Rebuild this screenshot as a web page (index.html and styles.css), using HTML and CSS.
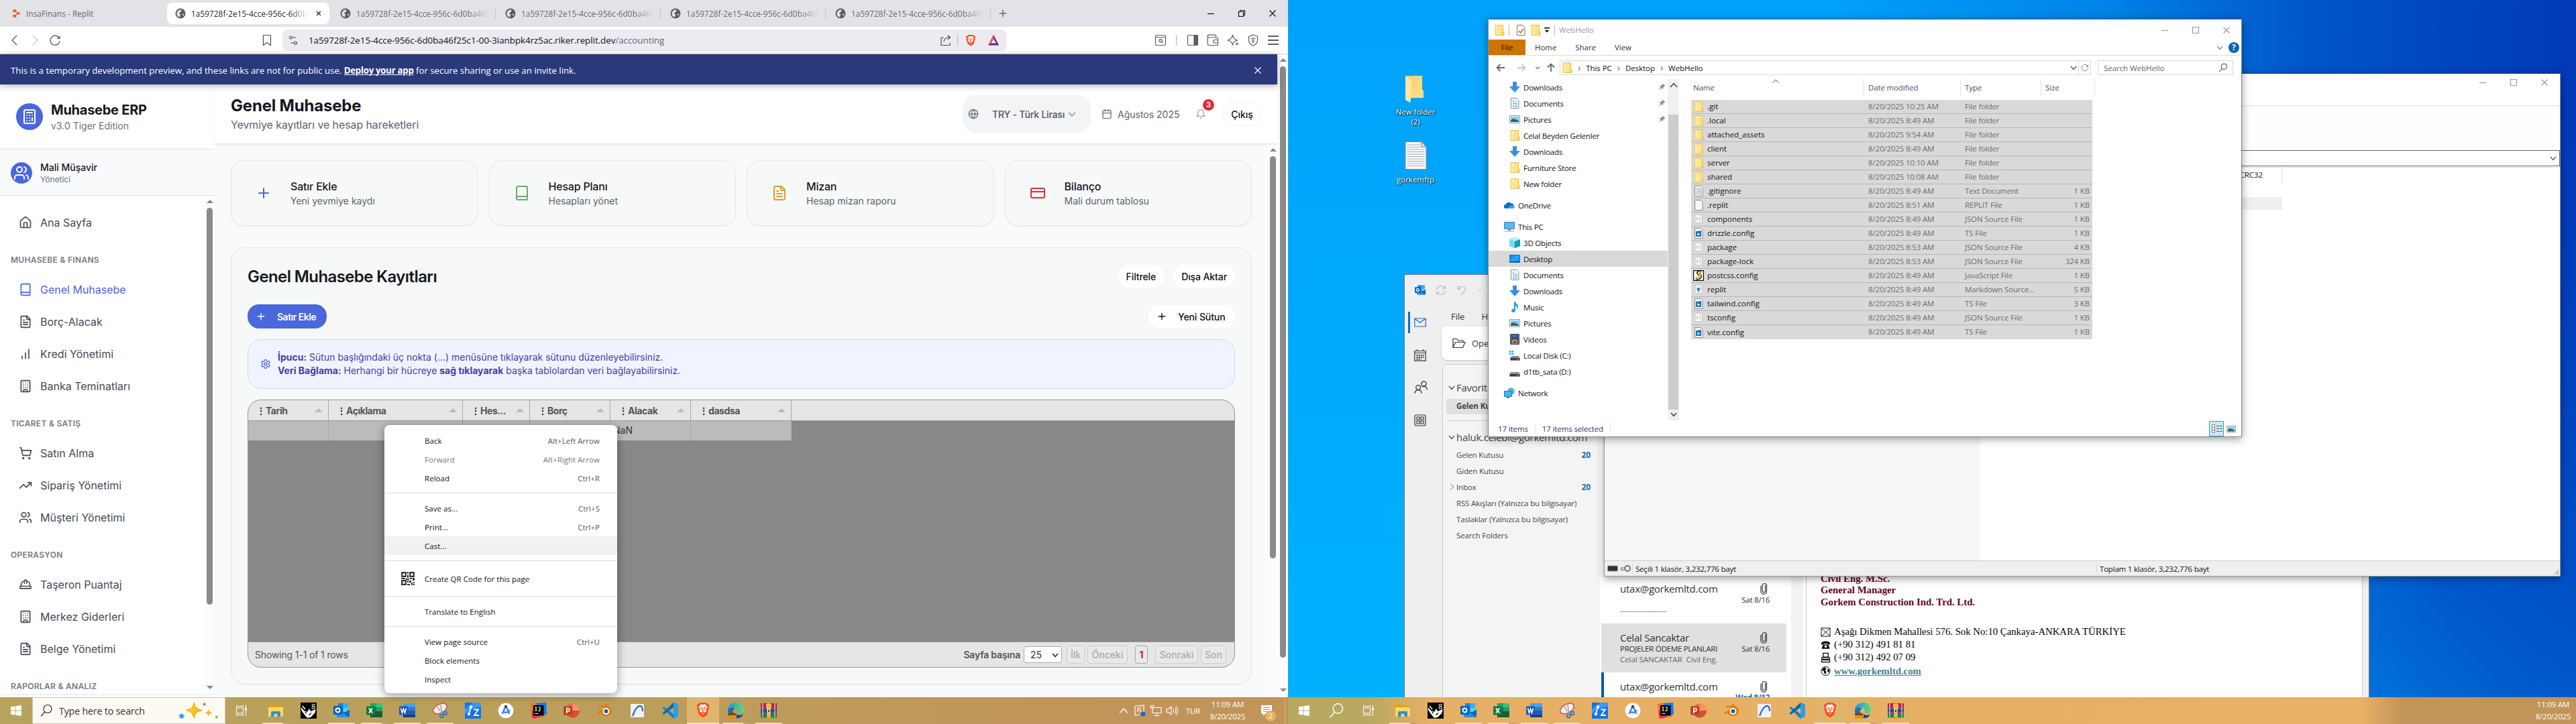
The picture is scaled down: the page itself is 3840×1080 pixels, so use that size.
FILE: index.html
```html
<!DOCTYPE html>
<html lang="tr">
<head>
<meta charset="utf-8">
<title>Muhasebe ERP</title>
<link rel="stylesheet" href="styles.css">
</head>
<body>
<svg class="sprite" aria-hidden="true">
<defs>
<linearGradient id="gfold" x1="0" x2="1"><stop offset="0" stop-color="#ffeca6"/><stop offset="1" stop-color="#ffdd7a"/></linearGradient>
<linearGradient id="gfold2" x1="0" x2="1" y2="1"><stop offset="0" stop-color="#f3cf6c"/><stop offset="1" stop-color="#ffe08a"/></linearGradient>
<linearGradient id="gblue" x1="0" y1="0" x2="1" y2="1"><stop offset="0" stop-color="#0a7bd8"/><stop offset=".5" stop-color="#29a8ff"/><stop offset="1" stop-color="#0a86e8"/></linearGradient>
<linearGradient id="gedge" x1="0" y1="0" x2="1" y2="0"><stop offset="0" stop-color="#1b8fe0"/><stop offset="1" stop-color="#5be07a"/></linearGradient>
<linearGradient id="gstar" x1="0" y1="0" x2="1" y2="1"><stop offset="0" stop-color="#ffe04a"/><stop offset="1" stop-color="#f5a800"/></linearGradient>
</defs>
<symbol id="globe-s" viewBox="0 0 16 16"><circle cx="8" cy="8" r="7.5" fill="#5b5d61"/><path d="M8 2.5c2 .3 2.500 1.200 1 2.200s-.5 1.800-2 2.300-1.500 1.500 0 1.800 1.500 1.500.5 2.700L7 13.500c-3-.5-5-3-4.500-6C3.200 4.500 5.500 2.400 8 2.500zM11.500 8.500l2 .5-1 2.500-1.500-1z" fill="#e3e2e7"/></symbol>
<symbol id="replit" viewBox="0 0 16 16" fill="#e8622a"><path d="M3 1.500h4.500a1 1 0 0 1 1 1V6H4a1.500 1.500 0 0 1-1.500-1.500V2zM8.500 6H13a1.200 1.200 0 0 1 1.200 1.200v1.600A1.200 1.200 0 0 1 13 10H8.500zM4 10h4.500v3.500a1 1 0 0 1-1 1H3.500a1 1 0 0 1-1-1v-2A1.500 1.500 0 0 1 4 10z"/></symbol>
<symbol id="x" viewBox="0 0 12 12"><path d="M1.500 1.500l9 9M10.500 1.500l-9 9"/></symbol>
<symbol id="plus" viewBox="0 0 24 24"><path d="M5 12h14M12 5v14"/></symbol>
<symbol id="min" viewBox="0 0 12 12"><path d="M1 6.500h10"/></symbol>
<symbol id="max" viewBox="0 0 12 12"><path d="M1.500 1.500h9v9h-9z"/></symbol>
<symbol id="restore" viewBox="0 0 12 12"><path d="M1.500 3.500h7v7h-7zM3.500 3.500v-2h7v7h-2"/></symbol>
<symbol id="chl" viewBox="0 0 18 18"><path d="M12 2L5 9l7 7"/></symbol>
<symbol id="chr" viewBox="0 0 18 18"><path d="M6 2l7 7-7 7"/></symbol>
<symbol id="chd" viewBox="0 0 12 12"><path d="M2 4l4 4.500L10 4"/></symbol>
<symbol id="chu" viewBox="0 0 12 12"><path d="M1 9l5-5.500L11 9"/></symbol>
<symbol id="reload" viewBox="0 0 18 18"><path d="M15.500 6.500A7 7 0 1 0 16 10"/><path d="M16.500 2.500v4.500H12z" fill="currentColor" stroke="none"/></symbol>
<symbol id="bookmark" viewBox="0 0 18 18"><path d="M4.500 1.500h9a1 1 0 0 1 1 1v14L9 12.500 3.500 16.500v-14a1 1 0 0 1 1-1z"/></symbol>
<symbol id="tune" viewBox="0 0 16 16"><circle cx="4.500" cy="4" r="2"/><path d="M6.500 4H12M9.500 12H4"/><circle cx="11.500" cy="12" r="2"/></symbol>
<symbol id="share" viewBox="0 0 18 18"><path d="M6 5H2v11.500h13V13M6 11c.5-4 3-6.500 9-6.500M11.500 1.500l4 3-4 3.500"/></symbol>
<symbol id="brave" viewBox="0 0 18 20"><path d="M5 1h8l1.500 1.500L17 4l-1 3 .3 1-2.300 8L9 19.500 4 16 1.700 8 2 7 1 4l2.500-1.500z" fill="#fb4e1d"/><path d="M9 3.500l2.500-.5 3 3.500-2 3 .8 2-2.300 2L9 16l-2-2.500-2.300-2 .8-2-2-3L6.500 3z" fill="#fff"/><path d="M5.500 7l2.500.6L7.500 10l1.500 1 1.500-1L10 7.600l2.500-.6M7.500 13.200L9 12.300l1.500.9L9 14.500z" stroke="#fb4e1d" fill="none" stroke-width="1"/></symbol>
<symbol id="bat" viewBox="0 0 18 18"><path d="M9 1L17 16.500H1z" fill="#4b2a8c"/><path d="M9 1L1 16.500l4-2.500L9 6.500z" fill="#ff5a2a"/><path d="M9 1l8 15.500-4-2.500L9 6.500z" fill="#a3278f"/><path d="M9 7l3.600 6.500H5.400z" fill="#fff"/></symbol>
<symbol id="psearch" viewBox="0 0 18 18"><rect x="1.500" y="1.500" width="15" height="15" rx="1.500"/><path d="M1.500 4.500h15M10.500 11.500l2 2"/><circle cx="9" cy="9.500" r="2.200"/></symbol>
<symbol id="side" viewBox="0 0 18 18"><rect x="1.500" y="1.500" width="15" height="15" rx="1.500"/><path d="M11 2h5v14h-5z" fill="currentColor"/></symbol>
<symbol id="wallet" viewBox="0 0 18 18"><path d="M13.500 5V2a.8.8 0 0 0-.8-.8H3A1.800 1.800 0 0 0 3 5h12.500a1 1 0 0 1 1 1v9.500a1 1 0 0 1-1 1H3a1.800 1.800 0 0 1-1.700-1.700V3M16.500 8.500H12a2.200 2.200 0 0 0 0 4.500h4.500"/></symbol>
<symbol id="leo" viewBox="0 0 18 18"><path d="M8.500 1c.8 4.500 2 6.500 7 8-5 1.500-6.200 3-7 7.500C7.500 12 6.500 10.500 1 9c5.500-1.500 6.500-3.500 7.500-8zM15 12v5M12.500 14.500h5"/></symbol>
<symbol id="vpn" viewBox="0 0 18 18"><path d="M9 1l6.500 2.300v6c0 3.500-2.500 6-6.500 7.700-4-1.700-6.500-4.200-6.500-7.700v-6zM5.500 7c2-1.700 5-1.700 7 0M6.800 9.300c1.300-1 3.100-1 4.400 0"/><circle cx="9" cy="11.500" r=".8"/></symbol>
<symbol id="burger" viewBox="0 0 18 18"><path d="M1 3h16M1 9h16M1 15h16"/></symbol>
<symbol id="calc" viewBox="0 0 24 24"><rect x="4" y="2" width="16" height="20" rx="2"/><path d="M8 6h8M16 10h.01M12 10h.01M8 10h.01M12 14h.01M8 14h.01M12 18h.01M8 18h.01M16 14v4"/></symbol>
<symbol id="users" viewBox="0 0 24 24"><path d="M16 21v-2a4 4 0 0 0-4-4H6a4 4 0 0 0-4 4v2"/><circle cx="9" cy="7" r="4"/><path d="M22 21v-2a4 4 0 0 0-3-3.870M16 3.130a4 4 0 0 1 0 7.750"/></symbol>
<symbol id="home" viewBox="0 0 24 24"><path d="M15 21v-8a1 1 0 0 0-1-1h-4a1 1 0 0 0-1 1v8"/><path d="M3 10a2 2 0 0 1 .709-1.528l7-5.999a2 2 0 0 1 2.582 0l7 5.999A2 2 0 0 1 21 10v9a2 2 0 0 1-2 2H5a2 2 0 0 1-2-2z"/></symbol>
<symbol id="book" viewBox="0 0 24 24"><path d="M4 19.500v-15A2.500 2.500 0 0 1 6.500 2H19a1 1 0 0 1 1 1v18a1 1 0 0 1-1 1H6.500a1 1 0 0 1 0-5H20"/></symbol>
<symbol id="file" viewBox="0 0 24 24"><path d="M15 2H6a2 2 0 0 0-2 2v16a2 2 0 0 0 2 2h12a2 2 0 0 0 2-2V7z"/><path d="M14 2v4a2 2 0 0 0 2 2h4M10 9H8M16 13H8M16 17H8"/></symbol>
<symbol id="bars" viewBox="0 0 24 24"><path d="M12 20V10M18 20V4M6 20v-4"/></symbol>
<symbol id="building" viewBox="0 0 24 24"><rect x="4" y="2" width="16" height="20" rx="2"/><path d="M9 22v-4h6v4M8 6h.01M16 6h.01M12 6h.01M12 10h.01M12 14h.01M16 10h.01M16 14h.01M8 10h.01M8 14h.01"/></symbol>
<symbol id="cart" viewBox="0 0 24 24"><circle cx="8" cy="21" r="1"/><circle cx="19" cy="21" r="1"/><path d="M2.050 2.050h2l2.660 12.420a2 2 0 0 0 2 1.580h9.780a2 2 0 0 0 1.950-1.570l1.650-7.430H5.120"/></symbol>
<symbol id="trend" viewBox="0 0 24 24"><path d="M22 7l-8.500 8.500-5-5L2 17"/><path d="M16 7h6v6"/></symbol>
<symbol id="hat" viewBox="0 0 24 24"><path d="M10 10V5a1 1 0 0 1 1-1h2a1 1 0 0 1 1 1v5M14 6a6 6 0 0 1 6 6v3M4 15v-3a6 6 0 0 1 6-6"/><rect x="2" y="15" width="20" height="4" rx="1"/></symbol>
<symbol id="globe" viewBox="0 0 24 24"><circle cx="12" cy="12" r="10"/><path d="M12 2a14.500 14.500 0 0 0 0 20 14.500 14.500 0 0 0 0-20M2 12h20"/></symbol>
<symbol id="cal" viewBox="0 0 24 24"><path d="M8 2v4M16 2v4"/><rect x="3" y="4" width="18" height="18" rx="2"/><path d="M3 10h18"/></symbol>
<symbol id="bell" viewBox="0 0 24 24"><path d="M6 8a6 6 0 0 1 12 0c0 7 3 9 3 9H3s3-2 3-9M10.300 21a1.940 1.940 0 0 0 3.400 0"/></symbol>
<symbol id="card" viewBox="0 0 24 24"><rect x="2" y="5" width="20" height="14" rx="2"/><path d="M2 10h20"/></symbol>
<symbol id="gear" viewBox="0 0 24 24"><path d="M12.220 2h-.44a2 2 0 0 0-2 2v.18a2 2 0 0 1-1 1.730l-.43.25a2 2 0 0 1-2 0l-.15-.08a2 2 0 0 0-2.730.73l-.22.38a2 2 0 0 0 .73 2.730l.15.1a2 2 0 0 1 1 1.720v.51a2 2 0 0 1-1 1.740l-.15.09a2 2 0 0 0-.73 2.730l.22.38a2 2 0 0 0 2.730.73l.15-.08a2 2 0 0 1 2 0l.43.25a2 2 0 0 1 1 1.730V20a2 2 0 0 0 2 2h.44a2 2 0 0 0 2-2v-.18a2 2 0 0 1 1-1.730l.43-.25a2 2 0 0 1 2 0l.15.08a2 2 0 0 0 2.730-.73l.22-.39a2 2 0 0 0-.73-2.730l-.15-.08a2 2 0 0 1-1-1.740v-.5a2 2 0 0 1 1-1.740l.15-.09a2 2 0 0 0 .73-2.730l-.22-.38a2 2 0 0 0-2.730-.73l-.15.08a2 2 0 0 1-2 0l-.43-.25a2 2 0 0 1-1-1.730V4a2 2 0 0 0-2-2z"/><circle cx="12" cy="12" r="3"/></symbol>
<symbol id="qr" viewBox="0 0 20 20"><path d="M1.200 1.200h5.600v5.600H1.200zM13.200 1.200h5.600v5.600h-5.600zM1.200 13.200h5.600v5.600H1.200z" fill="none" stroke="#333" stroke-width="2.200"/><path d="M9 0h2v3H9zM9 5h2v4H9zM0 9h6v2H0zM7 10h5v2H7zM13 9h3v2h-3zM17 9h3v4h-3zM9 13h2v3H9zM9 18h4v2H9zM12 13h3v3h-3zM15 16h2v4h-2zM18 15h2v2h-2zM18 18h2v2h-2z" fill="#333"/></symbol>
<symbol id="win" viewBox="0 0 16 16"><path d="M0 2.300L6.600 1.400v6.200H0zM7.400 1.300L16 0v7.600H7.400zM0 8.400h6.600v6.200L0 13.700zM7.400 8.400H16V16l-8.600-1.300z" fill="#fff"/></symbol>
<symbol id="mag" viewBox="0 0 20 20"><circle cx="12" cy="7.500" r="6"/><path d="M7.800 12L2 18.500"/></symbol>
<symbol id="spark" viewBox="0 0 64 26"><path d="M25 0c1.500 8 4 10 12 12-8 2-10.500 4-12 12-1.500-8-4-10-12-12 8-2 10.500-4 12-12z" fill="url(#gstar)" stroke="#f5b400" stroke-width="1.500" stroke-linejoin="round"/><path d="M47.500 10c.8 4 2 5 6 6-4 1-5.200 2-6 6-.8-4-2-5-6-6 4-1 5.200-2 6-6z" fill="#fbb830"/><path d="M5.500 16l2 3 3.200.5-2.500 2.500.2 3-3-1.200-3.400.5 1.200-3L1 18.500l3.500.2z" fill="#1ba1f0"/><circle cx="41" cy="2.500" r="2" fill="#f0562e"/><circle cx="60" cy="22.500" r="2.100" fill="#8cc63f"/></symbol>
<symbol id="tview" viewBox="0 0 18 18"><path d="M1.500 5h10v8h-10zM1.500 1v1.500h10V1M1.500 17v-1.500h10V17M15.500 1v16" fill="none" stroke="#fff" stroke-width="1.100"/><path d="M14 5h3v3h-3z" fill="#fff"/></symbol>
<symbol id="t-exp" viewBox="0 0 24 24"><path d="M1 4a1 1 0 0 1 1-1h7l2 2h11a1 1 0 0 1 1 1v6H1z" fill="#dfa012"/><path d="M1 7h22v14H1z" fill="#ffd667"/><path d="M5 21v-6a2 2 0 0 1 2-2h10a2 2 0 0 1 2 2v6h-4.500v-4h-5v4z" fill="#2f8fd6"/></symbol>
<symbol id="t-rhino" viewBox="0 0 24 24"><path d="M0 0h24v24H0z" fill="#000"/><path d="M1 7l4 5 5 2 3-5 2 4 8-3-2 6-6 6-5 1-5-6-4-6z" fill="#fff"/><path d="M3 5l4 5M9 17l4-3M13 20l4-4" stroke="#fff" stroke-width="1.500"/><path d="M6 13l3 2-1 2zM12 18l5-4-3 5z" fill="#000"/><text x="16" y="9.800" font-size="11" fill="#fff" font-family="Open Sans">8</text></symbol>
<symbol id="t-out" viewBox="0 0 24 24"><path d="M7 1h15v19H7z" fill="#0f6cbd"/><path d="M7 1h7.500v7H7z" fill="#1a86d9"/><path d="M14.500 1H22v7h-7.500z" fill="#33b0f0"/><path d="M14.500 8H22v6h-7.500z" fill="#50d0ff"/><path d="M5 10l10 6 9-6v10a2 2 0 0 1-2 2H7a2 2 0 0 1-2-2z" fill="#1f90e0"/><path d="M15 16l9-5v11z" fill="#1565b5"/><rect y="5" width="13" height="13" rx="1.500" fill="#0a64b8"/><circle cx="6.500" cy="11.500" r="3" fill="none" stroke="#fff" stroke-width="1.800"/></symbol>
<symbol id="t-xl" viewBox="0 0 24 24"><path d="M6 1h18v21H6z" fill="#185c37"/><path d="M6 1h9v6H6z" fill="#21a366"/><path d="M15 1h9v6h-9z" fill="#33c481"/><path d="M15 7h9v6h-9z" fill="#21a366"/><path d="M6 7h9v6H6z" fill="#107c41"/><rect y="5.500" width="13" height="13" rx="1.200" fill="#107c41"/><path d="M4 8.500l5 7M9 8.500l-5 7" stroke="#fff" stroke-width="1.900"/></symbol>
<symbol id="t-wd" viewBox="0 0 24 24"><path d="M6 1h18v5.500H6z" fill="#41a5ee"/><path d="M6 6.500h18V12H6z" fill="#2b7cd3"/><path d="M6 12h18v5.500H6z" fill="#185abd"/><path d="M6 17.500h18V22H6z" fill="#103f91"/><rect y="5.500" width="13" height="13" rx="1.200" fill="#185abd"/><path d="M2.500 8.500L4.500 15.300 6.500 9.500l2 5.800 2-6.800" stroke="#fff" stroke-width="1.600" fill="none"/></symbol>
<symbol id="t-snip" viewBox="0 0 24 24"><ellipse cx="12" cy="9" rx="11" ry="6.500" transform="rotate(-28 12 9)" fill="#eef0f2" stroke="#d9504a" stroke-width="1.400"/><path d="M12 13L8 6M13 3l1 10 5 3" stroke="#8a9298" stroke-width="1.300" fill="none"/><circle cx="14.500" cy="20" r="2.500" fill="none" stroke="#2279b5" stroke-width="1.700"/><circle cx="20" cy="16" r="2.500" fill="none" stroke="#2279b5" stroke-width="1.700"/></symbol>
<symbol id="t-blue" viewBox="0 0 24 24"><path d="M0 0h24v24H0z" fill="#1273ee"/><path d="M0 10L12 0h8L0 17zM12 0h12v6L8 10z" fill="#57b4ff" opacity=".6"/><path d="M6 16.500L9 7.500M13.500 10.500H20L14 19h7" stroke="#fff" stroke-width="1.800" fill="none"/><circle cx="9" cy="6.500" r="2.200" fill="#fff"/><circle cx="6" cy="17" r="2.200" fill="#fff"/></symbol>
<symbol id="t-as" viewBox="0 0 24 24"><circle cx="12" cy="12" r="11.300" fill="#fff"/><path d="M12 5L6.500 17M12 5l5.500 12M7 13.500c3 1.500 7 1.500 10 0" stroke="#3b82f0" stroke-width="2.300" fill="none"/><circle cx="12" cy="6" r="2.200" fill="#2c4a6e"/><circle cx="17" cy="12" r="1.500" fill="#38a866"/></symbol>
<symbol id="t-ij" viewBox="0 0 24 24"><path d="M0 2l9-1 4 8-6 15-5-1z" fill="#fb3a62"/><path d="M7 1l16-1 1 17-8 5-6-8z" fill="#087cfa"/><path d="M0 3l8-2 2 4-9 7zM15 17l7 2-1 3-6-1z" fill="#f97a12"/><path d="M1 14l6-3 8 11-12 2z" fill="#fe2857"/><path d="M4 4h15.500v15.500H4z" fill="#000"/><path d="M6.500 7h3M8 7v5M6.500 12h3M11.500 7H14v4a1.200 1.200 0 0 1-2.500.5M6.500 16.500h5" stroke="#fff" stroke-width="1.200" fill="none"/></symbol>
<symbol id="t-pp" viewBox="0 0 24 24"><circle cx="13.500" cy="12" r="10.500" fill="#ed6c47"/><path d="M13.500 1.500A10.500 10.500 0 0 1 24 12H13.500z" fill="#ff8f6b"/><path d="M3 12h21a10.500 10.500 0 0 1-21 0z" fill="#d35230"/><rect y="5.500" width="13" height="13" rx="1.200" fill="#c43e1c"/><path d="M4.800 16V8.500h2a2 2 0 0 1 0 4.500h-2" stroke="#fff" stroke-width="1.700" fill="none"/></symbol>
<symbol id="t-bl" viewBox="0 0 24 24"><path d="M1 16L13 7H4.500a1 1 0 0 1 0-2H14l-2-2.500 1.500-1L21 8c4 5 1 12-6.500 12C10 20 7 18 6.500 14.500L3 17.500z" fill="#ea7600"/><circle cx="14.500" cy="13" r="5" fill="#fff"/><circle cx="14.500" cy="13" r="3" fill="#135ea2"/></symbol>
<symbol id="t-arc" viewBox="0 0 24 24"><rect x="2" y="2" width="20" height="20" rx="2" fill="#eef3fa"/><path d="M5 20C9 9 12 5 16 5c3 0 4 3 4 8" fill="none" stroke="#4168d8" stroke-width="2.300"/></symbol>
<symbol id="t-vs" viewBox="0 0 24 24"><path d="M17 0l6.500 3v18L17 24 2 9.500l-1.500-2L2.500 6 17 17z" fill="#1a7fc9"/><path d="M17 0v7L2.500 18 .5 16.500 2 14.500z" fill="#0a68ae"/><path d="M17 0l6.500 3v18L17 24z" fill="#2a9fea"/></symbol>
<symbol id="t-edge" viewBox="0 0 24 24"><path d="M0 12C0 5 5 0 12 0s12 5 12 10c0 4-3 6-6 6-2 0-4-1-3-3 1-3-1-6-5-6C5 7 1 10 0 13z" fill="url(#gedge)"/><path d="M0 12c2-5 9-6 11-3-5 2-5 10 3 13-8 4-14-3-14-10z" fill="#1273c4"/><path d="M13 17c3 3 8 2 10 0-2 5-6 7-10 6z" fill="#0d4a96"/><path d="M0 16h12v8H0z" fill="#e0930e"/><path d="M0 16h12v3H0z" fill="#6e4a12"/><path d="M4 14.500h4V17H4z" fill="none" stroke="#6e4a12"/></symbol>
<symbol id="t-rar" viewBox="0 0 24 24"><path d="M0 1h24v7H0z" fill="#b81e50"/><path d="M0 8.500h24v7H0z" fill="#3c3f9c"/><path d="M0 16h24v6.500H0z" fill="#1f8040"/><path d="M2 1h2v21H2zM20 1h2v21h-2z" fill="#d8c9a8" opacity=".7"/><path d="M9 0h6v24H9z" fill="#c79a4a"/><path d="M8 2h8v7H8zM9.500 16h5v6h-5z" fill="#e8b84a"/><path d="M8 10h8v6H8z" fill="#6b3a1c"/><path d="M10 10h4v5h-4z" fill="none" stroke="#f2e8d0" stroke-width="1.400"/></symbol>
<symbol id="e-fold" viewBox="0 0 16 16"><path d="M2 .5h11.500v10H15v5H2z" fill="url(#gfold)" stroke="#e9c14a"/><path d="M13.500 10.500v5" stroke="#e9c14a"/></symbol>
<symbol id="e-down" viewBox="0 0 16 16"><path d="M5 0h6v7h5l-8 9-8-9h5z" fill="#3b8ede"/></symbol>
<symbol id="e-doc" viewBox="0 0 16 16"><path d="M2.500.5h8.500l3 3v12H2.500z" fill="#fff" stroke="#85898d"/><path d="M5 4h2.500M5 6h2.500M9.500 6H12M5 8.500h7M5 11h2.500M9 11h3M5 13h7" stroke="#2f9ce8"/></symbol>
<symbol id="e-pic" viewBox="0 0 16 16"><path d="M.5 2.500h15v11H.5z" fill="#fff" stroke="#8c9196"/><path d="M2 4h12v8H2z" fill="#8cc4f2"/><path d="M2 9l4-2 8 3v2H2z" fill="#2a6468"/></symbol>
<symbol id="e-cloud" viewBox="0 0 16 12"><path d="M3 11a3 3 0 0 1-.6-6A5 5 0 0 1 11 3.500a4 4 0 0 1 2 7.500z" fill="#0f6ccc"/><path d="M5 11l5-4.500 4-.5a2.600 2.600 0 0 1-.5 5z" fill="#30a5f0"/></symbol>
<symbol id="e-pc" viewBox="0 0 16 16"><path d="M.5 1.500h15v10H.5z" fill="#56b9f5" stroke="#3c7fb0"/><path d="M6 12h4v2H6zM1 14.500h14v1H1z" fill="#8a9aa8"/></symbol>
<symbol id="e-3d" viewBox="0 0 16 16"><path d="M8 0l8 3v10l-8 3-8-3V3z" fill="#35b8cc"/><path d="M0 3l8 3v10l-8-3z" fill="#6fe0ec"/><path d="M8 6l8-3v10l-8 3z" fill="#179db5"/><path d="M8 0l8 3-8 3-8-3z" fill="#b2f2f6"/></symbol>
<symbol id="e-desk" viewBox="0 0 16 16"><path d="M.5 2.500h15v11H.5z" fill="url(#gblue)" stroke="#1374bd"/><path d="M1 12.500h14" stroke="#0a4f8c"/></symbol>
<symbol id="e-mus" viewBox="0 0 16 16"><path d="M7 0h2c0 3 4 3.500 4 7.500 0 1.500-1 3-2 3.500 1-3-.5-4.500-2-5v7c0 4-6 3.500-6 .5 0-2 2-3 4-2.500z" fill="#18a0f2"/></symbol>
<symbol id="e-vid" viewBox="0 0 16 16"><path d="M1 0h14v16H1z" fill="#34383c"/><path d="M4 1h8v6.500H4z" fill="#3b6fd0"/><path d="M4 8.500h8V15H4z" fill="#c69a30"/><path d="M4 4l4 1 4-2v4H4zM6 11h4v3H6z" fill="#31508a"/><path d="M2.500.5v15M13.500.5v15" stroke="#fff" stroke-dasharray="1.200 1.500"/></symbol>
<symbol id="e-disk" viewBox="0 0 16 16"><path d="M2 9h12l1.500 3v3.500H.5V12z" fill="#8b9094"/><path d="M.5 12h15v3.500H.5z" fill="#3b3f42"/><circle cx="12.500" cy="13.700" r="1" fill="#4be04b"/></symbol>
<symbol id="e-diskc" viewBox="0 0 16 16"><path d="M3 9h11l1.500 3v3.500H1.500V12z" fill="#8b9094"/><path d="M1.500 12h14v3.500h-14z" fill="#3b3f42"/><circle cx="12.500" cy="13.700" r="1" fill="#4be04b"/><path d="M0 1h2.500v2.500H0zM3.500 1H6v2.500H3.500zM0 4.500h2.500V7H0zM3.500 4.500H6V7H3.500z" fill="#0db1f2"/></symbol>
<symbol id="e-net" viewBox="0 0 16 16"><circle cx="10.500" cy="5.500" r="5.300" fill="#58b4dc"/><path d="M.5 5.500h11v8H.5z" fill="#42b3f5" stroke="#2c76ab"/><path d="M4 14h4v2H4z" fill="#5c7d96"/></symbol>
<symbol id="e-txt" viewBox="0 0 16 16"><path d="M2.500.5H11l3 3v12H2.500z" fill="#fafafa" stroke="#85888c"/><path d="M4.500 4.500h7M4.500 6.500h8M4.500 8.500h8M4.500 10.500h8M4.500 12.500h8" stroke="#a4a7aa"/></symbol>
<symbol id="e-blank" viewBox="0 0 16 16"><path d="M2.500.5H11l3 3v12H2.500z" fill="#f8f8f8" stroke="#85888c"/></symbol>
<symbol id="e-json" viewBox="0 0 16 16"><path d="M3 1.500h7.500l2.500 2v10H3z" fill="#fcfcfc" stroke="#c3c6c9"/><path d="M6.500 5C5 5 6.500 7.500 5 7.500 6.500 7.500 5 10 6.500 10M9 5c1.500 0 0 2.500 1.500 2.500C9 7.500 10.500 10 9 10" fill="none" stroke="#b5b752" stroke-width="1.200"/></symbol>
<symbol id="e-ts" viewBox="0 0 16 16"><path d="M2.500.5H11l3 3v12H2.500z" fill="#fafafa" stroke="#85888c"/><path d="M4 5l8-1v9H4z" fill="#0e77c9"/><path d="M6.500 7.500l4 2-4 2z" fill="#fff"/></symbol>
<symbol id="e-js" viewBox="0 0 16 16"><path d="M.5.500h15v15H.5z" fill="#fff" stroke="#111" stroke-width="1.500"/><path d="M12 2.500C6 1 6 5 9 6.500s4 5-5 7" fill="none" stroke="#222" stroke-width="4"/><path d="M11.500 3C7 2 7 5 9.500 6.500s2 4.500-5 6.500" fill="none" stroke="#f2de3a" stroke-width="2.200"/></symbol>
<symbol id="e-md" viewBox="0 0 16 16"><path d="M3 1.500h7.500l2.500 2v10H3z" fill="#fcfcfc" stroke="#c3c6c9"/><path d="M5.500 5h5v3.500l-1 .5v1.500L8 12l-1.500-1.500V9l-1-.5z" fill="#4b8cae"/></symbol>
<symbol id="e-check" viewBox="0 0 16 16"><path d="M2.500.5H11l3 3v12H2.500z" fill="#fff" stroke="#777"/><path d="M5 9l2.500 3L12 6" fill="none" stroke="#e2642b" stroke-width="1.800"/></symbol>
<symbol id="pin" viewBox="0 0 12 12"><path d="M7.500.5l4 4-1.500.3L8 7l-.3 2.500L5.500 7.300 1 11.500l3.500-5L2.500 4.500 5 4l2-2z" fill="#8494a0"/></symbol>
<symbol id="arl" viewBox="0 0 14 14"><path d="M13 7H2M6.500 2L1.500 7l5 5"/></symbol>
<symbol id="arr" viewBox="0 0 14 14"><path d="M1 7h11M7.500 2l5 5-5 5"/></symbol>
<symbol id="aru" viewBox="0 0 14 14"><path d="M7 13V2M2 6.500l5-5 5 5"/></symbol>
<symbol id="mail" viewBox="0 0 18 18"><path d="M.8 3h16.400v12H.8zM.8 3L9 9.500 17.200 3"/></symbol>
<symbol id="calo" viewBox="0 0 18 18"><path d="M.8 2.500h16.400v14.700H.8zM.8 5.500h16.400M4.500 0v3M13.500 0v3"/><path d="M3.500 9h11M3.500 12h11M3.500 14.700h7" stroke-dasharray="2 1.200" stroke-width="1.800"/></symbol>
<symbol id="ppl" viewBox="0 0 18 18"><circle cx="13" cy="4" r="3.200"/><circle cx="5.500" cy="9" r="3"/><path d="M.8 17c.3-6 9-6 9.400 0M10.500 8.200c4-2 6.800.5 7 4"/></symbol>
<symbol id="apps" viewBox="0 0 18 18"><rect x="1" y="1" width="16" height="16" rx="2"/><path d="M4 4h4v4H4zM10 4h4v4h-4zM4 10h4v4H4zM10 10h4v4h-4z"/></symbol>
<symbol id="sync" viewBox="0 0 18 18"><path d="M2 8a7.200 7.200 0 0 1 13.500-2.500M16 10a7.200 7.200 0 0 1-13.500 2.500M16 1.500v4.500h-4.500M2 16.500V12h4.500"/></symbol>
<symbol id="undo" viewBox="0 0 16 18"><path d="M1.500 1.500v5.500H7M1.500 7C5 1.500 13 1.500 14 6.500c.5 3-3 6-7.500 10.500"/></symbol>
<symbol id="ofold" viewBox="0 0 20 16"><path d="M1 14.500V1.500h5.500l2 2.500H16v2.500M1 14.500L4.500 6.500H19l-3.500 8z"/></symbol>
<symbol id="clip" viewBox="0 0 12 18"><path d="M8.500 4v8.500a2.200 2.200 0 0 1-4.400 0V4a3.300 3.300 0 0 1 6.400 0v9a4.300 4.300 0 0 1-8.600 0V5"/></symbol>
<symbol id="tele" viewBox="0 0 16 16"><path d="M1 6C1 1 15 1 15 6v1.500h-3.500V6h-7v1.500H1zM4 7.500h8l2.500 6.500h-13z" fill="#000"/><circle cx="8" cy="10.500" r="2" fill="#fff"/></symbol>
<symbol id="fax" viewBox="0 0 16 16"><path d="M4 1h8v6H4zM2 7.500h12v3H2zM1.500 12h13v3h-13z" fill="none" stroke="#000" stroke-width="1.300"/></symbol>
</svg>

<main class="screens">
<!-- Left monitor -->
<section class="screen left">
  <div class="browser">
    <div class="tabs">
      <div class="tab first"><svg class="c14"><use href="#replit"/></svg><span>InsaFinans - Replit</span></div>
      <div class="tab active"><svg class="c16"><use href="#globe-s"/></svg><span class="fade">1a59728f-2e15-4cce-956c-6d0ba46f25c1</span><svg class="ln c8 b2"><use href="#x"/></svg></div>
      <div class="tab"><svg class="c16"><use href="#globe-s"/></svg><span class="fade">1a59728f-2e15-4cce-956c-6d0ba46f25c1</span></div>
      <div class="tab"><svg class="c16"><use href="#globe-s"/></svg><span class="fade">1a59728f-2e15-4cce-956c-6d0ba46f25c1</span></div>
      <div class="tab"><svg class="c16"><use href="#globe-s"/></svg><span class="fade">1a59728f-2e15-4cce-956c-6d0ba46f25c1</span></div>
      <div class="tab"><svg class="c16"><use href="#globe-s"/></svg><span class="fade">1a59728f-2e15-4cce-956c-6d0ba46f25c1</span></div>
      <svg class="ln c18 newtab"><use href="#plus"/></svg>
      <div class="wctl dark"><svg class="ln c12"><use href="#min"/></svg><svg class="ln c12"><use href="#restore"/></svg><svg class="ln c12"><use href="#x"/></svg></div>
    </div>
    <div class="toolbar">
      <svg class="ln c18 mid"><use href="#chl"/></svg><svg class="ln c18 pale"><use href="#chr"/></svg><svg class="ln c18 mid"><use href="#reload"/></svg>
      <svg class="ln c18 mid bm"><use href="#bookmark"/></svg>
      <div class="url"><svg class="ln c16 mid"><use href="#tune"/></svg><span class="addr">1a59728f-2e15-4cce-956c-6d0ba46f25c1-00-3ianbpk4rz5ac.riker.replit.dev<em>/accounting</em></span><svg class="ln c18 mid"><use href="#share"/></svg><i class="vr"></i><svg class="c18"><use href="#brave"/></svg><svg class="c18 bat"><use href="#bat"/></svg></div>
      <div class="tools"><svg class="ln c18"><use href="#psearch"/></svg><i class="vr"></i><svg class="ln c18"><use href="#side"/></svg><svg class="ln c18"><use href="#wallet"/></svg><svg class="ln c18"><use href="#leo"/></svg><svg class="ln c18"><use href="#vpn"/></svg><svg class="ln c18 b2"><use href="#burger"/></svg></div>
    </div>
    <div class="view">
      <div class="page">
        <div class="banner"><p>This is a temporary development preview, and these links are not for public use. <b>Deploy your app</b> for secure sharing or use an invite link.</p><svg class="ln c12"><use href="#x"/></svg></div>
        <div class="app">
          <aside class="side">
            <div class="brand"><span class="logo"><svg class="lu c24"><use href="#calc"/></svg></span><div><h1>Muhasebe ERP</h1><p>v3.0 Tiger Edition</p></div></div>
            <div class="user"><span class="ava"><svg class="lu c24"><use href="#users"/></svg></span><div><b>Mali Müşavir</b><p>Yönetici</p></div></div>
            <div class="navwrap">
              <nav>
                <a><svg class="lu c20"><use href="#home"/></svg>Ana Sayfa</a>
                <h2>MUHASEBE &amp; FINANS</h2>
                <a class="on"><svg class="lu c20"><use href="#book"/></svg>Genel Muhasebe</a>
                <a><svg class="lu c20"><use href="#file"/></svg>Borç-Alacak</a>
                <a><svg class="lu c20"><use href="#bars"/></svg>Kredi Yönetimi</a>
                <a><svg class="lu c20"><use href="#building"/></svg>Banka Teminatları</a>
                <h2>TICARET &amp; SATIŞ</h2>
                <a><svg class="lu c20"><use href="#cart"/></svg>Satın Alma</a>
                <a><svg class="lu c20"><use href="#trend"/></svg>Sipariş Yönetimi</a>
                <a><svg class="lu c20"><use href="#users"/></svg>Müşteri Yönetimi</a>
                <h2>OPERASYON</h2>
                <a><svg class="lu c20"><use href="#hat"/></svg>Taşeron Puantaj</a>
                <a><svg class="lu c20"><use href="#building"/></svg>Merkez Giderleri</a>
                <a><svg class="lu c20"><use href="#file"/></svg>Belge Yönetimi</a>
                <h2>RAPORLAR &amp; ANALIZ</h2>
              </nav>
              <div class="sb"><i class="up"></i><i class="thumb t-nav"></i><i class="dn"></i></div>
            </div>
          </aside>
          <div class="main">
            <header class="head">
              <div class="ttl"><h1>Genel Muhasebe</h1><p>Yevmiye kayıtları ve hesap hareketleri</p></div>
              <div class="cur"><svg class="lu c16"><use href="#globe"/></svg><span>TRY - Türk Lirası</span><svg class="ln c14"><use href="#chd"/></svg></div>
              <div class="date"><svg class="lu c16"><use href="#cal"/></svg><span>Ağustos 2025</span></div>
              <div class="bell"><svg class="lu c16"><use href="#bell"/></svg><i>3</i></div>
              <div class="out">Çıkış</div>
            </header>
            <div class="bodyrow">
              <div class="content">
                <div class="cards">
                  <div class="card"><svg class="lu c24 blue"><use href="#plus"/></svg><div><b>Satır Ekle</b><p>Yeni yevmiye kaydı</p></div></div>
                  <div class="card"><svg class="lu c24 green"><use href="#book"/></svg><div><b>Hesap Planı</b><p>Hesapları yönet</p></div></div>
                  <div class="card"><svg class="lu c24 amber"><use href="#file"/></svg><div><b>Mizan</b><p>Hesap mizan raporu</p></div></div>
                  <div class="card"><svg class="lu c24 red"><use href="#card"/></svg><div><b>Bilanço</b><p>Mali durum tablosu</p></div></div>
                </div>
                <div class="panel">
                  <div class="prow one"><h2>Genel Muhasebe Kayıtları</h2><span class="btn">Filtrele</span><span class="btn">Dışa Aktar</span></div>
                  <div class="prow two"><span class="btn primary"><svg class="lu c16"><use href="#plus"/></svg>Satır Ekle</span><span class="btn ghost"><svg class="lu c16"><use href="#plus"/></svg>Yeni Sütun</span></div>
                  <div class="tip"><svg class="lu c16"><use href="#gear"/></svg><div><p><b>İpucu:</b> Sütun başlığındaki üç nokta (...) menüsüne tıklayarak sütunu düzenleyebilirsiniz.</p><p><b>Veri Bağlama:</b> Herhangi bir hücreye <b>sağ tıklayarak</b> başka tablolardan veri bağlayabilirsiniz.</p></div></div>
                  <div class="table">
                    <div class="thead">
                      <div><i>⋮</i>Tarih<u></u></div><div><i>⋮</i>Açıklama<u></u></div><div><i>⋮</i>Hes...<u></u></div><div><i>⋮</i>Borç<u></u></div><div><i>⋮</i>Alacak<u></u></div><div><i>⋮</i>dasdsa<u></u></div>
                    </div>
                    <div class="trow"><div></div><div></div><div></div><div></div><div>NaN</div><div></div></div>
                    <div class="tfoot"><span class="cnt">Showing 1-1 of 1 rows</span><b>Sayfa başına</b><span class="pick">25<svg class="ln c12 b2"><use href="#chd"/></svg></span><span class="pg p1">İlk</span><span class="pg p2">Önceki</span><span class="pg cur1">1</span><span class="pg p3">Sonraki</span><span class="pg p4">Son</span></div>
                  </div>
                </div>
              </div>
              <div class="sb inner"><i class="up"></i><i class="thumb t-main"></i></div>
            </div>
          </div>
        </div>
      </div>
      <div class="sb outer"><i class="up"></i><i class="thumb t-page"></i><i class="dn"></i></div>
    </div>
  </div>

  <div class="menu seg">
    <div class="mi"><span>Back</span><em>Alt+Left Arrow</em></div>
    <div class="mi off"><span>Forward</span><em>Alt+Right Arrow</em></div>
    <div class="mi"><span>Reload</span><em>Ctrl+R</em></div>
    <hr>
    <div class="mi"><span>Save as...</span><em>Ctrl+S</em></div>
    <div class="mi"><span>Print...</span><em>Ctrl+P</em></div>
    <div class="mi hov"><span>Cast...</span></div>
    <hr>
    <div class="mi tall"><svg class="c20 q"><use href="#qr"/></svg><span>Create QR Code for this page</span></div>
    <hr>
    <div class="mi"><span>Translate to English</span></div>
    <hr>
    <div class="mi"><span>View page source</span><em>Ctrl+U</em></div>
    <div class="mi"><span>Block elements</span></div>
    <div class="mi"><span>Inspect</span></div>
  </div>

  <footer class="taskbar tl">
    <span class="tk"><svg class="c16"><use href="#win"/></svg></span>
    <div class="search"><svg class="ln c20"><use href="#mag"/></svg><span>Type here to search</span><svg class="spark"><use href="#spark"/></svg></div>
    <span class="tk tv"><svg class="c18"><use href="#tview"/></svg></span>
    <span class="tk run st"><svg class="c24"><use href="#t-exp"/></svg></span>
    <span class="tk"><svg class="c24"><use href="#t-rhino"/></svg></span>
    <span class="tk run"><svg class="c24"><use href="#t-out"/></svg></span>
    <span class="tk run st"><svg class="c24"><use href="#t-xl"/></svg></span>
    <span class="tk run"><svg class="c24"><use href="#t-wd"/></svg></span>
    <span class="tk run"><svg class="c24"><use href="#t-snip"/></svg></span>
    <span class="tk"><svg class="c24"><use href="#t-blue"/></svg></span>
    <span class="tk"><svg class="c24"><use href="#t-as"/></svg></span>
    <span class="tk"><svg class="c24"><use href="#t-ij"/></svg></span>
    <span class="tk"><svg class="c24"><use href="#t-pp"/></svg></span>
    <span class="tk"><svg class="c24"><use href="#t-bl"/></svg></span>
    <span class="tk"><svg class="c24"><use href="#t-arc"/></svg></span>
    <span class="tk"><svg class="c24"><use href="#t-vs"/></svg></span>
    <span class="tk cur2"><svg class="c24"><use href="#brave"/></svg></span>
    <span class="tk run st"><svg class="c24"><use href="#t-edge"/></svg></span>
    <span class="tk run"><svg class="c24"><use href="#t-rar"/></svg></span>
    <div class="tray">
      <svg class="ln c14"><use href="#chu"/></svg>
      <svg class="c18" viewBox="0 0 18 18"><path d="M2 2.500L15 1v12M2 2.500v13.500l7-1M6 11V5.500l6-1M6 8h4v3h2" fill="none" stroke="#fff" stroke-width="1.200"/><circle cx="14" cy="14" r="3.500" fill="#2266c4"/></svg>
      <svg class="c18" viewBox="0 0 18 18"><path d="M4 4.500h13v8H4zM10 12.500V16M6.500 16.500h8M1.500 1.500h4v3.500h-4z" fill="none" stroke="#fff" stroke-width="1.200"/></svg>
      <svg class="c18" viewBox="0 0 18 18"><path d="M1 6.500h3L8 3v12l-4-3.500H1zM10.500 6.500c1.300 1.500 1.300 3.500 0 5M13 4.500c2.500 2.700 2.500 6.300 0 9M15 2.500c3.500 4 3.500 9 0 13" fill="none" stroke="#fff" stroke-width="1.100"/></svg>
      <span class="lang">TUR</span>
      <span class="clock"><span>11:09 AM</span><span>8/20/2025</span></span>
      <span class="note"><svg class="c16" viewBox="0 0 16 16"><path d="M0 0h16v12.500H6L3 16v-3.500H0z" fill="#fff"/><path d="M3 3.500h10M3 6.500h10M3 9.500h7" stroke="#c1945a"/></svg><i>2</i></span>
    </div>
  </footer>
</section>

<!-- Right monitor -->
<section class="screen right seg">
  <div class="dicons">
    <div class="dico"><svg class="big" viewBox="0 0 34 42"><path d="M2 1h25v21l2 1v11H8z" fill="url(#gfold2)"/><path d="M2 1l9 7v24l-2 9-7-4z" fill="#ffe7a0"/></svg><span>New folder<br>(2)</span></div>
    <div class="dico two"><svg class="big" viewBox="0 0 34 42"><path d="M2 .5h24l7 8v33H2z" fill="#fafafa" stroke="#83898e"/><path d="M25.500.5v8H33" fill="#ddd" stroke="#83898e"/><path d="M4.500 5h19M4.500 8.500h19M4.500 12h26M4.500 15.500h26M4.500 19h26M4.500 22.500h26M4.500 26h26M4.500 29.500h26M4.500 33h26M4.500 36.500h26" stroke="#a5a9ac"/></svg><span>gorkemftp</span></div>
  </div>

  <div class="win outlook">
    <div class="obar"><svg class="c16"><use href="#t-out"/></svg><svg class="ln c16"><use href="#sync"/></svg><svg class="ln c16"><use href="#undo"/></svg><svg class="ln c8"><use href="#chd"/></svg></div>
    <div class="obody">
      <div class="rail"><span class="on"><svg class="ln c18"><use href="#mail"/></svg></span><span><svg class="ln c18"><use href="#calo"/></svg></span><span><svg class="ln c20"><use href="#ppl"/></svg></span><span><svg class="ln c18"><use href="#apps"/></svg></span></div>
      <div class="owork">
        <div class="omenu"><span>File</span><span>Home</span></div>
        <div class="ribbon"><svg class="ln c20"><use href="#ofold"/></svg><span>Open</span></div>
        <div class="panes">
          <div class="folders">
            <div class="fh"><svg class="ln c12"><use href="#chd"/></svg>Favorites</div>
            <div class="fsel">Gelen Kutusu</div>
            <div class="fh acc"><svg class="ln c12"><use href="#chd"/></svg>haluk.celebi@gorkemltd.com</div>
            <div class="fr"><span>Gelen Kutusu</span><b>20</b></div>
            <div class="fr"><span>Giden Kutusu</span></div>
            <div class="fr open"><svg class="ln c12"><use href="#chr"/></svg><span>Inbox</span><b>20</b></div>
            <div class="fr"><span>RSS Akışları (Yalnızca bu bilgisayar)</span></div>
            <div class="fr"><span>Taslaklar (Yalnızca bu bilgisayar)</span></div>
            <div class="fr"><span>Search Folders</span></div>
          </div>
          <div class="msgs">
            <div class="msg"><p class="from">utax@gorkemltd.com<svg class="ln clip"><use href="#clip"/></svg></p><p class="sub"><span></span><em>Sat 8/16</em></p><p class="pre">-------------------</p></div>
            <div class="msg chosen"><p class="from">Celal Sancaktar<svg class="ln clip"><use href="#clip"/></svg></p><p class="sub"><span>PROJELER ÖDEME PLANLARI</span><em>Sat 8/16</em></p><p class="pre">Celal SANCAKTAR&nbsp; Civil Eng.</p></div>
            <div class="msg new"><p class="from">utax@gorkemltd.com<svg class="ln clip"><use href="#clip"/></svg></p><p class="sub"><span></span><em>Wed 8/13</em></p></div>
          </div>
          <i class="gut"></i>
          <article class="read">
            <p class="g a">Civil Eng. M.Sc.</p><p class="g b">General Manager</p><p class="g c">Gorkem Construction Ind. Trd. Ltd.</p>
            <p class="ad d"><svg class="c16" viewBox="0 0 16 16"><path d="M1 1.500h14v13H1zM1 1.500l14 13M15 1.500l-14 13" fill="none" stroke="#000"/></svg>Aşağı Dikmen Mahallesi 576. Sok No:10 Çankaya-ANKARA TÜRKİYE</p>
            <p class="ad"><svg class="c16"><use href="#tele"/></svg>(+90 312) 491 81 81</p>
            <p class="ad"><svg class="c16"><use href="#fax"/></svg>(+90 312) 492 07 09</p>
            <p class="ad w"><svg class="c16" viewBox="0 0 16 16"><circle cx="8" cy="8" r="7" fill="none" stroke="#000"/><path d="M3 4l4-2 2 2-2 3 2 2-1 4-2-1-1-4-3-1zM11 4l3 2-1 5-2-2z" fill="#000"/></svg><b>www.gorkemltd.com</b></p>
          </article>
        </div>
      </div>
    </div>
  </div>

  <div class="win rar">
    <div class="rtitle"><div class="wctl"><svg class="ln c12"><use href="#min"/></svg><svg class="ln c12"><use href="#max"/></svg><svg class="ln c12"><use href="#x"/></svg></div></div>
    <div class="rtools"></div>
    <div class="raddr"><svg class="ln c12"><use href="#chd"/></svg></div>
    <div class="rmain"><div class="rtree"></div><div class="rlist"><div class="rhead">CRC32</div><div class="rsel"></div></div></div>
    <div class="rstat"><span class="ri"><svg class="c16" viewBox="0 0 16 16"><rect x=".5" y="4" width="15" height="8" rx="1.500" fill="#2b3338" stroke="#8aa2ae"/></svg><svg class="c16" viewBox="0 0 16 16"><circle cx="11" cy="8" r="4" fill="none" stroke="#777" stroke-width="2"/><path d="M8 7H1v2h1v2h2V9.500h4" fill="none" stroke="#777"/></svg></span><span class="s1">Seçili 1 klasör, 3,232,776 bayt</span><span class="s2">Toplam 1 klasör, 3,232,776 bayt</span><i class="grip"></i></div>
  </div>

  <div class="win explorer">
    <div class="etitle"><svg class="c16"><use href="#e-fold"/></svg><i class="vr"></i><svg class="c16 k1"><use href="#e-check"/></svg><svg class="c16 k2"><use href="#e-fold"/></svg><svg class="c8 k3" viewBox="0 0 8 8"><path d="M0 0h8v1.500H0zM1 4h6L4 7.500z"/></svg><i class="vr k4"></i><span>WebHello</span><div class="wctl"><svg class="ln c12"><use href="#min"/></svg><svg class="ln c12"><use href="#max"/></svg><svg class="ln c12"><use href="#x"/></svg></div></div>
    <div class="etabs"><span class="f">File</span><span>Home</span><span>Share</span><span>View</span><div class="eh"><svg class="ln c12"><use href="#chd"/></svg><i>?</i></div></div>
    <div class="eaddr"><svg class="ln c14 b2"><use href="#arl"/></svg><svg class="ln c14 b2 pale"><use href="#arr"/></svg><svg class="ln c8 b2"><use href="#chd"/></svg><svg class="ln c14 b2"><use href="#aru"/></svg>
      <div class="crumbs"><svg class="c16"><use href="#e-fold"/></svg><i>›</i><span>This PC</span><i>›</i><span>Desktop</span><i>›</i><span>WebHello</span><b><svg class="ln c12 b2"><use href="#chd"/></svg></b><em><svg class="ln c12"><use href="#reload"/></svg></em></div>
      <div class="esearch"><span>Search WebHello</span><svg class="ln c14 b2"><use href="#mag"/></svg></div></div>
    <div class="emain">
      <div class="tree">
        <div><svg class="c16"><use href="#e-down"/></svg>Downloads<svg class="pin"><use href="#pin"/></svg></div>
        <div><svg class="c16"><use href="#e-doc"/></svg>Documents<svg class="pin"><use href="#pin"/></svg></div>
        <div><svg class="c16"><use href="#e-pic"/></svg>Pictures<svg class="pin"><use href="#pin"/></svg></div>
        <div><svg class="c16"><use href="#e-fold"/></svg>Celal Beyden Gelenler</div>
        <div><svg class="c16"><use href="#e-down"/></svg>Downloads</div>
        <div><svg class="c16"><use href="#e-fold"/></svg>Furniture Store</div>
        <div><svg class="c16"><use href="#e-fold"/></svg>New folder</div>
        <div class="top"><svg class="c16"><use href="#e-cloud"/></svg>OneDrive</div>
        <div class="top"><svg class="c16"><use href="#e-pc"/></svg>This PC</div>
        <div><svg class="c16"><use href="#e-3d"/></svg>3D Objects</div>
        <div class="on"><svg class="c16"><use href="#e-desk"/></svg>Desktop</div>
        <div><svg class="c16"><use href="#e-doc"/></svg>Documents</div>
        <div><svg class="c16"><use href="#e-down"/></svg>Downloads</div>
        <div><svg class="c16"><use href="#e-mus"/></svg>Music</div>
        <div><svg class="c16"><use href="#e-pic"/></svg>Pictures</div>
        <div><svg class="c16"><use href="#e-vid"/></svg>Videos</div>
        <div><svg class="c16"><use href="#e-diskc"/></svg>Local Disk (C:)</div>
        <div><svg class="c16"><use href="#e-disk"/></svg>d1tb_sata (D:)</div>
        <div class="top"><svg class="c16"><use href="#e-net"/></svg>Network</div>
      </div>
      <div class="esb"><svg class="ln c12 b2"><use href="#chu"/></svg><i></i><svg class="ln c12 b2"><use href="#chd"/></svg></div>
      <div class="list">
        <div class="lh"><span>Name<svg class="ln c10 caret"><use href="#chu"/></svg></span><span>Date modified</span><span>Type</span><span>Size</span></div>
        <div class="lr"><span><svg class="c16"><use href="#e-fold"/></svg>.git</span><span>8/20/2025 10:25 AM</span><span>File folder</span><span></span></div>
        <div class="lr"><span><svg class="c16"><use href="#e-fold"/></svg>.local</span><span>8/20/2025 8:49 AM</span><span>File folder</span><span></span></div>
        <div class="lr"><span><svg class="c16"><use href="#e-fold"/></svg>attached_assets</span><span>8/20/2025 9:54 AM</span><span>File folder</span><span></span></div>
        <div class="lr"><span><svg class="c16"><use href="#e-fold"/></svg>client</span><span>8/20/2025 8:49 AM</span><span>File folder</span><span></span></div>
        <div class="lr"><span><svg class="c16"><use href="#e-fold"/></svg>server</span><span>8/20/2025 10:10 AM</span><span>File folder</span><span></span></div>
        <div class="lr"><span><svg class="c16"><use href="#e-fold"/></svg>shared</span><span>8/20/2025 10:08 AM</span><span>File folder</span><span></span></div>
        <div class="lr"><span><svg class="c16"><use href="#e-txt"/></svg>.gitignore</span><span>8/20/2025 8:49 AM</span><span>Text Document</span><span>1 KB</span></div>
        <div class="lr"><span><svg class="c16"><use href="#e-blank"/></svg>.replit</span><span>8/20/2025 8:51 AM</span><span>REPLIT File</span><span>1 KB</span></div>
        <div class="lr"><span><svg class="c16"><use href="#e-json"/></svg>components</span><span>8/20/2025 8:49 AM</span><span>JSON Source File</span><span>1 KB</span></div>
        <div class="lr"><span><svg class="c16"><use href="#e-ts"/></svg>drizzle.config</span><span>8/20/2025 8:49 AM</span><span>TS File</span><span>1 KB</span></div>
        <div class="lr"><span><svg class="c16"><use href="#e-json"/></svg>package</span><span>8/20/2025 8:53 AM</span><span>JSON Source File</span><span>4 KB</span></div>
        <div class="lr"><span><svg class="c16"><use href="#e-json"/></svg>package-lock</span><span>8/20/2025 8:53 AM</span><span>JSON Source File</span><span>324 KB</span></div>
        <div class="lr"><span><svg class="c16"><use href="#e-js"/></svg>postcss.config</span><span>8/20/2025 8:49 AM</span><span>JavaScript File</span><span>1 KB</span></div>
        <div class="lr"><span><svg class="c16"><use href="#e-md"/></svg>replit</span><span>8/20/2025 8:49 AM</span><span>Markdown Source...</span><span>5 KB</span></div>
        <div class="lr"><span><svg class="c16"><use href="#e-ts"/></svg>tailwind.config</span><span>8/20/2025 8:49 AM</span><span>TS File</span><span>3 KB</span></div>
        <div class="lr"><span><svg class="c16"><use href="#e-json"/></svg>tsconfig</span><span>8/20/2025 8:49 AM</span><span>JSON Source File</span><span>1 KB</span></div>
        <div class="lr"><span><svg class="c16"><use href="#e-ts"/></svg>vite.config</span><span>8/20/2025 8:49 AM</span><span>TS File</span><span>1 KB</span></div>
      </div>
    </div>
    <div class="estat"><span>17 items</span><span>17 items selected</span><div class="vb"><svg viewBox="0 0 22 23"><path d="M.5.5h21v22H.5z" fill="#cce8f6" stroke="#26a0da"/><path d="M4.500 5.500h4v12h-4zM4.500 9.500h4M4.500 13.500h4" fill="#fff" stroke="#888"/><path d="M11 7.500h4M16 7.500h4M11 11.500h4M16 11.500h4M11 15.500h4M16 15.500h4" stroke="#555"/></svg><svg class="c14"><use href="#e-pic"/></svg></div></div>
  </div>

  <footer class="taskbar tr">
    <span class="tk"><svg class="c16"><use href="#win"/></svg></span>
    <span class="tk"><svg class="ln c24 wh"><use href="#mag"/></svg></span>
    <span class="tk tv"><svg class="c18"><use href="#tview"/></svg></span>
    <span class="tk run st"><svg class="c24"><use href="#t-exp"/></svg></span>
    <span class="tk"><svg class="c24"><use href="#t-rhino"/></svg></span>
    <span class="tk run"><svg class="c24"><use href="#t-out"/></svg></span>
    <span class="tk run st"><svg class="c24"><use href="#t-xl"/></svg></span>
    <span class="tk run"><svg class="c24"><use href="#t-wd"/></svg></span>
    <span class="tk run"><svg class="c24"><use href="#t-snip"/></svg></span>
    <span class="tk"><svg class="c24"><use href="#t-blue"/></svg></span>
    <span class="tk"><svg class="c24"><use href="#t-as"/></svg></span>
    <span class="tk"><svg class="c24"><use href="#t-ij"/></svg></span>
    <span class="tk"><svg class="c24"><use href="#t-pp"/></svg></span>
    <span class="tk"><svg class="c24"><use href="#t-bl"/></svg></span>
    <span class="tk"><svg class="c24"><use href="#t-arc"/></svg></span>
    <span class="tk"><svg class="c24"><use href="#t-vs"/></svg></span>
    <span class="tk cur2"><svg class="c24"><use href="#brave"/></svg></span>
    <span class="tk run st"><svg class="c24"><use href="#t-edge"/></svg></span>
    <span class="tk run"><svg class="c24"><use href="#t-rar"/></svg></span>
    <div class="tray only"><span class="clock"><span>11:09 AM</span><span>8/20/2025</span></span></div>
  </footer>
</section>
</main>
</body>
</html>
```
FILE: styles.css
```css
* { box-sizing: border-box; margin: 0; padding: 0; }
body { width: 3840px; height: 1080px; overflow: hidden; font-family: "Open Sans", "Liberation Sans", sans-serif; white-space: nowrap; color: #111; }
i, em { font-style: normal; }
svg { flex: none; display: block; }
.sprite { position: absolute; width: 0; height: 0; }
.ln { fill: none; stroke: currentColor; stroke-width: 1.2; }
.lu { fill: none; stroke: currentColor; stroke-width: 2; stroke-linecap: round; stroke-linejoin: round; }
.b2 { stroke-width: 1.8; }
.c8 { width: 8px; height: 8px; } .c10 { width: 10px; height: 10px; } .c12 { width: 12px; height: 12px; }
.c14 { width: 14px; height: 14px; } .c16 { width: 16px; height: 16px; } .c18 { width: 18px; height: 18px; }
.c20 { width: 20px; height: 20px; } .c24 { width: 24px; height: 24px; }
.mid { color: #4d4f55; } .pale { color: #c4c4c8; } .wh { color: #fff; }
.vr { width: 1px; background: #b5b5ba; align-self: center; height: 16px; flex: none; }

.screens { display: flex; width: 3840px; height: 1080px; }
.screen { position: relative; width: 1920px; height: 1080px; overflow: hidden; display: flex; flex-direction: column; }
.left { background: #fff; }

/* Browser chrome */
.browser { height: 1040px; display: flex; flex-direction: column; }
.tabs { height: 40px; background: #e3e2e7; display: flex; align-items: center; padding-left: 3px; font-size: 11.8px; letter-spacing: .05px; color: #66676c; flex: none; }
.tab { width: 246px; height: 32px; display: flex; align-items: center; padding-left: 12px; position: relative; }
.tab .c16 { margin-right: 8px; }
.tab.first .c14 { margin-right: 7px; width: 16px; height: 14px; margin-left: 1px; }
.tab:nth-child(n+3)::after { content: ""; position: absolute; right: 2px; top: 8px; width: 1px; height: 16px; background: #c6c5ca; }
.tab.active { width: 242px; background: #fff; border-radius: 8px; color: #222; margin-right: 4px; }
.tab .fade { width: 198px; overflow: hidden; -webkit-mask-image: linear-gradient(90deg, #000 85%, transparent); mask-image: linear-gradient(90deg, #000 85%, transparent); }
.tab.active .fade { width: 174px; margin-right: 12px; }
.newtab { margin-left: 7px; stroke-width: 2; }
.wctl { margin-left: auto; display: flex; gap: 34px; align-items: center; color: #999; }
.wctl.dark { color: #111; margin-right: 17px; }
.toolbar { height: 41px; display: flex; align-items: center; padding: 0 13px; border-bottom: 1px solid #d5d5da; flex: none; }
.toolbar > svg + svg { margin-left: 12px; }
.toolbar > .bm { margin-left: 298px; }
.url { width: 1080px; height: 32px; margin-left: 14px; background: #ecebf1; border-radius: 8px; display: flex; align-items: center; padding: 0 11px 0 8px; font-size: 13.4px; color: #111; }
.addr { margin-left: 15px; flex: 1; letter-spacing: -.05px; }
.url em { color: #66676c; }
.url .vr { margin: 0 10px 0 8px; height: 16px; }
.url .bat { margin-left: 16px; }
.tools { margin-left: auto; display: flex; align-items: center; gap: 12px; color: #5c5d63; }
.tools .vr { margin: 0 3px 0 2px; }
.view { flex: 1; display: flex; min-height: 0; }
.page { width: 1904px; display: flex; flex-direction: column; }
.banner { height: 45px; background: #29397c; color: #fff; display: flex; align-items: center; justify-content: space-between; padding: 2px 23px 0 16px; font-size: 13.3px; letter-spacing: -.02px; box-shadow: 0 2px 10px rgba(0,0,0,.3); position: relative; z-index: 3; flex: none; }
.banner b { text-decoration: underline; font-weight: 700; letter-spacing: -.3px; }
.app { flex: 1; display: flex; min-height: 0; font-family: Inter, "Open Sans", sans-serif; }

/* Scrollbars */
.sb { width: 15px; display: flex; flex-direction: column; align-items: center; background: #fcfcfd; padding: 6px 0 8px; flex: none; }
.sb .up { border: 5px solid transparent; border-top: 0; border-bottom: 5px solid #858585; }
.sb .dn { border: 5px solid transparent; border-bottom: 0; border-top: 5px solid #858585; margin-top: auto; }
.thumb { width: 9px; border-radius: 5px; background: #8a8a8a; margin-top: 7px; }
.t-nav { height: 592px; } .t-main { height: 600px; } .t-page { height: 882px; }
.sb.outer { width: 16px; padding-left: 1px; background: #fdfdfd; }
.sb.inner { width: 13px; }

/* Sidebar */
.side { width: 320px; background: #fff; display: flex; flex-direction: column; border-bottom: 1px solid #e5e7eb; height: 911px; }
.brand { height: 97px; border-bottom: 1px solid #dfe1e6; display: flex; align-items: center; padding: 0 24px; gap: 12px; flex: none; }
.logo { width: 40px; height: 40px; border-radius: 50%; background: #4b67dc; color: #fff; display: grid; place-items: center; }
.brand h1 { font-size: 20px; line-height: 28px; letter-spacing: -.25px; font-weight: 700; color: #16171f; }
.brand p { font-size: 14px; line-height: 20px; color: #6b7280; }
.user { height: 69px; background: #f9fafc; border-bottom: 1px solid #dfe1e6; display: flex; align-items: center; padding: 1px 16px 0; gap: 12px; flex: none; }
.ava { width: 32px; height: 32px; border-radius: 50%; background: #4b67dc; color: #fff; display: grid; place-items: center; }
.user b { font-size: 14px; line-height: 20px; font-weight: 500; display: block; color: #16171f; }
.user p { font-size: 12px; line-height: 16px; color: #6b7280; }
.navwrap { flex: 1; display: flex; min-height: 0; overflow: hidden; }
nav { flex: 1; padding-top: 16px; }
nav a { height: 48px; display: flex; align-items: center; padding-left: 28px; gap: 12px; font-size: 16px; color: #434956; }
nav a.on { color: #4b67dc; }
nav h2 { height: 52px; padding: 23px 0 0 16px; font-size: 12px; line-height: 17px; font-weight: 600; letter-spacing: .3px; color: #737985; }

/* App content */
.main { width: 1584px; display: flex; flex-direction: column; }
.head { height: 89px; background: #fff; border-bottom: 1px solid #e1e2e6; display: flex; align-items: center; padding: 0 24px; flex: none; box-shadow: 0 1px 3px rgba(0,0,0,.06); z-index: 2; }
.head h1 { font-size: 24px; line-height: 32px; letter-spacing: -.2px; color: #16171f; margin-top: 2px; }
.head p { font-size: 16px; line-height: 24px; color: #5b6270; letter-spacing: -.1px; }
.ttl { flex: 1; padding-bottom: 2px; }
.cur { width: 191px; height: 56px; border-radius: 20px; background: #f3f4f6; display: flex; align-items: center; padding-left: 8px; font-size: 14px; font-weight: 500; color: #4b5260; letter-spacing: -.2px; }
.cur span { margin-left: 20px; flex: 1; } .cur .c14 { margin-right: 21px; color: #8b909a; }
.cur .lu, .date .lu { color: #6b7280; }
.date { display: flex; gap: 8px; margin-left: 16px; font-size: 14px; align-items: center; color: #5b6270; width: 116px; }
.bell { position: relative; margin-left: 24px; color: #9ca3af; }
.bell i { position: absolute; left: 11px; top: -14px; width: 17px; height: 17px; border-radius: 50%; background: #d92f3c; color: #fff; font-size: 11px; line-height: 17px; text-align: center; font-weight: 600; }
.out { margin-left: 25px; width: 57px; height: 36px; border: 1px solid #f1f2f4; border-radius: 18px; display: grid; place-items: center; font-size: 14px; font-weight: 500; }
.bodyrow { flex: 1; display: flex; min-height: 0; background: #f9fafc; }
.content { flex: 1; padding: 24px 25px 0 24px; }
.cards { display: grid; grid-template-columns: repeat(4, 1fr); gap: 16px; }
.card { height: 98px; background: #f7f9f8; border: 1px solid #e5e7ee; border-radius: 20px; display: flex; align-items: center; padding-left: 36px; gap: 28px; box-shadow: 0 1px 2px rgba(0,0,0,.05); }
.card b { font-size: 16px; line-height: 24px; font-weight: 500; display: block; color: #16171f; letter-spacing: -.2px; }
.card p { font-size: 14px; line-height: 20px; color: #5b6270; }
.blue { color: #4b67dc; } .green { color: #5cb65c; } .amber { color: #e29a2e; } .red { color: #d92f3c; }
.panel { margin-top: 32px; height: 652px; background: #f7f9f8; border: 1px solid #e5e7ee; border-radius: 22px; padding: 24px; box-shadow: 0 1px 2px rgba(0,0,0,.05); }
.prow { display: flex; align-items: center; }
.one { height: 36px; gap: 14px; } .two { height: 36px; justify-content: space-between; margin-top: 24px; }
.panel h2 { flex: 1; font-size: 24px; font-weight: 600; letter-spacing: -.6px; color: #16171f; }
.btn { height: 34px; border-radius: 17px; background: #fff; padding: 0 12px; display: flex; align-items: center; font-size: 14px; font-weight: 500; letter-spacing: -.1px; }
.btn svg { stroke-width: 2; margin: 0 16px 0 0; }
.btn.primary { height: 36px; width: 118px; background: #4b67dc; color: #fff; font-weight: 600; letter-spacing: -.5px; }
.btn.ghost { width: 129px; }
.tip { height: 74px; margin-top: 16px; background: #eff4fe; border: 1px solid #c9d8fb; border-radius: 20px; display: flex; align-items: center; padding-left: 18px; gap: 10px; color: #463cae; font-size: 14px; line-height: 20px; }
.tip svg { color: #5668e6; }
.table { margin-top: 16px; height: 400px; border: 1px solid #999; border-radius: 20px; background: #888; overflow: hidden; display: flex; flex-direction: column; color: #555; font-size: 14px; }
.thead, .trow { display: grid; grid-template-columns: 120px 200px 100px 120px 120px 150px; flex: none; }
.thead { height: 31px; background: #e6e6e6; border-bottom: 1px solid #999; }
.thead div { display: flex; align-items: center; border-right: 1px solid #aaa; font-weight: 700; padding: 0 8px 0 12px; letter-spacing: -.45px; }
.thead i { width: 9px; margin-right: 5px; color: #333; flex: none; }
.thead u { margin-left: auto; border: 6px solid transparent; border-top: 0; border-bottom: 6px solid #bbb; }
.trow { height: 29px; width: 810px; background: #bbb; color: #333; }
.trow div { border-right: 1px solid #aaa; padding: 5px 4px; }
.tfoot { margin-top: auto; height: 38px; border-top: 1px solid #999; background: #e6e6e6; display: flex; align-items: center; padding: 0 12px 0 10px; flex: none; }
.cnt { flex: 1; letter-spacing: -.15px; }
.tfoot b { letter-spacing: -.2px; font-weight: 600; }
.pick { width: 57px; height: 25px; margin: 0 7px 0 5px; border: 1px solid #aaa; border-radius: 3px; background: #fff; display: flex; align-items: center; justify-content: space-between; padding: 0 3px 0 9px; color: #333; }
.pg { height: 27px; border: 1px solid #ccc; border-radius: 3px; display: grid; place-items: center; color: #aaa; background: #e9e9e9; font-weight: 500; }
.p1 { width: 27px; } .p2 { width: 60px; margin-left: 4px; } .p3 { width: 64px; } .p4 { width: 38px; margin-left: 4px; }
.cur1 { width: 19px; margin: 0 11px; border-color: #aaa; color: #c22; font-weight: 700; }

/* Context menu */
.seg { font-family: "Open Sans", sans-serif; font-size: 11.5px; letter-spacing: -.05px; }
.menu { position: absolute; left: 573px; top: 634px; width: 347px; height: 400px; background: #fff; border-radius: 8px; box-shadow: 0 3px 14px rgba(0,0,0,.4); padding-top: 9px; z-index: 10; letter-spacing: .04px; }
.mi { height: 28px; display: flex; align-items: center; justify-content: space-between; padding: 0 26px 0 60px; position: relative; }
.mi em { color: #555; } .mi.off { color: #777; } .mi.off em { color: #777; }
.mi.hov { background: #f1f1f1; }
.mi.tall { height: 36px; padding-left: 25px; justify-content: flex-start; gap: 15px; }
.menu hr { border: 0; border-top: 1px solid #dcdde0; margin: 8px 0 8px; }

/* Taskbar */
.taskbar { height: 40px; margin-top: auto; display: flex; flex: none; position: relative; z-index: 5; color: #fff; }
.tl { background: linear-gradient(90deg, #b7a35d, #bb9f5c 45%, #c1945a 85%); }
.tr { background: linear-gradient(90deg, #b8a860 0, #b8a860 120px, #e5b065 210px, #e8b265 1600px, #c1945a 1660px); }
.tk { width: 48px; display: grid; place-items: center; margin-right: 1px; position: relative; flex: none; }
.tk:first-child, .tk:nth-child(2) { margin-right: 0; }
.tk.tv { margin-right: 3px; }
.tk.run::after { content: ""; position: absolute; left: 4px; bottom: 0; width: 40px; height: 2px; background: #fbdab2; }
.tk.st::before { content: ""; position: absolute; left: 35px; bottom: 0; width: 9px; height: 2px; background: #c4a183; z-index: 1; }
.tk.cur2 { background: #dfb56e; border-bottom: 2px solid #fbe0bd; }
.search { width: 288px; background: #fef9f3; border: 1px solid #c9c6c0; display: flex; align-items: center; padding: 0 8px 0 10px; color: #333; font-size: 14.2px; letter-spacing: -.15px; }
.search span { flex: 1; margin-left: 9px; }
.spark { width: 62px; height: 25px; }
.tray { margin-left: auto; display: flex; align-items: center; font-size: 11.5px; gap: 6px; padding-right: 5px; border-right: 1px solid #d8b483; margin-right: 4px; letter-spacing: -.2px; }
.tray .c14 { margin-right: 2px; }
.lang { margin: 0 5px 0 6px; }
.clock { display: flex; flex-direction: column; align-items: center; line-height: 18px; width: 60px; }
.note { position: relative; margin-left: 14px; margin-right: 14px; }
.note i { position: absolute; left: 6px; top: 8px; width: 16px; height: 16px; border-radius: 50%; background: #e8b15c; text-align: center; line-height: 16px; font-size: 10px; }
.tray.only { border: 0; padding: 0; margin-right: 4px; }

/* Right monitor */
.right { background: radial-gradient(ellipse 1300px 2200px at 2100px 100px, rgba(0,52,178,.95) 15%, rgba(0,78,196,.9) 45%, rgba(0,110,220,.6) 68%, transparent 100%), linear-gradient(180deg, #00a2f9, #00b2ff); }
.dicons { position: absolute; left: 152px; top: 112px; width: 76px; color: #fff; text-align: center; line-height: 15px; text-shadow: 1px 1px 2px #000, 0 0 2px rgba(0,0,0,.6); font-size: 11.6px; }
.dico { display: flex; flex-direction: column; align-items: center; gap: 5px; }
.big { width: 34px; height: 42px; }
.dico.two { margin-top: 22px; gap: 7px; }
.win { position: absolute; display: flex; flex-direction: column; background: #fff; box-shadow: 0 3px 12px rgba(0,0,0,.4); }

/* Mail window */
.outlook { left: 173px; top: 409px; width: 1439px; height: 640px; background: #efefef; border: 1px solid #777; color: #333; box-shadow: none; }
.obar { height: 46px; display: flex; align-items: center; padding-left: 15px; gap: 15px; color: #b5b5b5; flex: none; }
.obody { display: flex; flex: 1; min-height: 0; }
.rail { width: 55px; display: flex; flex-direction: column; flex: none; padding-left: 5px; }
.rail span { height: 32px; margin: 9px 0 7.5px; display: flex; align-items: center; padding-left: 9px; color: #333; }
.rail span.on { border-left: 3px solid #0f6cbd; padding-left: 6px; color: #1a6fb8; }
.owork { flex: 1; display: flex; flex-direction: column; min-width: 0; }
.omenu { height: 31px; padding: 7px 0 0 14px; font-size: 13px; display: flex; gap: 25px; flex: none; }
.ribbon { height: 50px; background: #fff; border-radius: 8px; box-shadow: 0 1px 3px rgba(0,0,0,.2); display: flex; align-items: center; padding-left: 16px; gap: 9px; font-size: 13px; margin-right: 10px; flex: none; }
.panes { flex: 1; margin: 6px 9px 0 1px; border: 1px solid #c9c9c9; border-radius: 8px 8px 0 0; display: flex; background: #fff; overflow: hidden; min-height: 0; }
.folders { width: 234px; background: #f4f4f4; padding-top: 22px; flex: none; color: #444; }
.fh { height: 24px; font-size: 15px; display: flex; align-items: center; padding-left: 7px; letter-spacing: -.28px; gap: 1px; }
.fsel { margin: 5px 0 0 5px; height: 23px; background: #e0e0e0; padding: 3px 0 0 15px; font-weight: 700; }
.fh.acc { margin-top: 21px; height: 26px; position: relative; margin-bottom: 1px; }
.fh.acc::before { content: ""; position: absolute; left: 5px; right: 0; top: -12px; height: 1px; background: #d0d0d0; }
.fr { height: 24px; display: flex; align-items: center; padding: 0 14px 0 20px; justify-content: space-between; letter-spacing: -.15px; }
.fr.open { padding-left: 7px; justify-content: flex-start; gap: 1px; }
.fr.open b { margin-left: auto; } .fr b { color: #1f66b5; font-size: 12px; }
.msgs { width: 276px; margin-left: 2px; padding-top: 313px; flex: none; }
.msg { height: 73px; padding: 11px 25px 0 28px; }
.msg.chosen { background: #e0e0e0; margin-bottom: 0; }
.msg.new { border-left: 4px solid #005a9e; padding-left: 24px; }
.from { height: 20px; font-size: 15px; display: flex; justify-content: space-between; align-items: center; letter-spacing: -.25px; line-height: 20px; }
.clip { width: 12px; height: 18px; margin-right: 3px; }
.sub { display: flex; justify-content: space-between; font-size: 11.6px; height: 15px; line-height: 13px; letter-spacing: -.3px; }
.msg.new em { color: #1f66b5; font-weight: 700; }
.pre { color: #666; font-size: 11.6px; line-height: 15px; letter-spacing: -.1px; }
.gut { width: 18px; background: #f3f3f3; margin: 300px 4px 0 7px; flex: none; }
.read { flex: 1; border-left: 1px solid #ccc; padding: 311px 0 0 21px; font-family: "Liberation Serif", serif; color: #000; letter-spacing: 0; }
.g { color: #62001a; font-weight: 700; font-size: 14.8px; height: 17px; line-height: 17px; } .g.b { height: 18px; } .g.c { height: 43px; }
.ad { height: 19px; display: flex; align-items: center; gap: 5px; font-size: 14.75px; line-height: 19px; }
.ad svg { width: 15px; }
.ad.w { height: 22px; }
.ad b { color: #4a7f93; text-decoration: underline; font-size: 14.7px; }

/* Archive window */
.rar { left: 471px; top: 109px; width: 1426px; height: 751px; border: 1px solid #999; border-top-color: #235; }
.rtitle { height: 49px; border-bottom: 2px solid #eee; display: flex; padding: 7px 17px 0; flex: none; align-items: flex-start; }
.rtools { height: 65px; background: #fefefe; flex: none; }
.raddr { height: 24px; border: 1px solid #666; display: flex; justify-content: flex-end; align-items: center; padding-right: 3px; flex: none; color: #555; }
.rmain { flex: 1; margin-top: 1px; border-top: 1px solid #ddd; display: flex; }
.rtree { width: 560px; background: #f7f7f7; }
.rlist { width: 450px; }
.rhead { height: 25px; border-right: 1px solid #ddd; text-align: right; padding: 3px 28px 0; color: #111; }
.rsel { height: 19px; background: #efefef; margin-top: 19px; }
.rstat { height: 23px; border-top: 1px solid #ccc; background: #efefef; display: flex; align-items: center; flex: none; position: relative; letter-spacing: -.2px; }
.ri { display: flex; width: 42px; padding-left: 4px; gap: 3px; border-right: 1px solid #d9d9d9; }
.s1 { width: 691px; padding-left: 4px; } .s2 { padding-left: 4px; border-left: 1px solid #d9d9d9; }
.grip { position: absolute; right: 1px; bottom: 2px; width: 9px; height: 9px; background: repeating-linear-gradient(90deg, #bbb 0 2px, transparent 2px 3px); clip-path: polygon(100% 0, 100% 100%, 0 100%); }

/* File explorer */
.explorer { left: 298px; top: 28px; width: 1124px; height: 624px; border: 1px solid #888; border-top-color: #456; }
.etitle { height: 30px; display: flex; align-items: center; padding: 1px 16px 0 8px; flex: none; font-size: 11.6px; color: #999; }
.etitle .vr { margin-left: 6px; } .k1 { margin-left: 9px; } .k2 { margin-left: 6px; } .k3 { margin-left: 5px; } .etitle .k4 { margin: 0 6px 0 7px; }
.etabs { height: 24px; border-bottom: 1px solid #dadbdc; display: flex; align-items: stretch; flex: none; line-height: 24px; color: #333; }
.etabs span { margin-left: 28px; } .etabs .f + span { margin-left: 14px; }
.etabs .f { width: 55px; background: #cf7400; color: #2b1500; text-align: center; margin-left: 0; }
.eh { margin-left: auto; display: flex; align-items: center; gap: 7px; padding-right: 3px; color: #888; }
.eh i { width: 16px; height: 16px; border-radius: 50%; background: #0a66b5; color: #fff; font-weight: 700; line-height: 16px; text-align: center; }
.eaddr { height: 35px; display: flex; align-items: center; padding: 1px 12px 0 11px; color: #666; flex: none; }
.eaddr > .pale { margin: 0 13px 0 17px; } .eaddr > .c8 { margin-right: 9px; }
.crumbs { width: 792px; height: 22px; border: 1px solid #d9d9d9; margin-left: 6px; display: flex; align-items: center; color: #111; padding-left: 2px; }
.crumbs i { margin: -2px 8px 0; color: #666; font-size: 14px; }
.crumbs b { margin-left: auto; height: 20px; padding: 4px 1px 0 0; color: #666; } .crumbs em { border-left: 1px solid #d9d9d9; height: 20px; padding: 4px 2px 0 3px; color: #666; }
.esearch { margin-left: auto; width: 202px; height: 22px; border: 1px solid #d9d9d9; display: flex; align-items: center; justify-content: space-between; padding: 0 7px 0 8px; }
.emain { flex: 1; display: flex; min-height: 0; }
.tree { width: 267px; color: #111; }
.tree div { height: 24px; display: flex; align-items: center; gap: 5px; padding: 0 3px 0 31px; letter-spacing: -.2px; }
.tree div.top { padding-left: 23px; margin: 8px 0; } .tree .top + .top { margin-top: 0; } .tree div.top + div:not(.top) { margin-top: -8px; }
.tree .on { background: #d9d9d9; }
.tree .pin { width: 12px; height: 12px; margin-left: auto; }
.esb { width: 17px; background: #f0f0f0; display: flex; flex-direction: column; align-items: center; color: #505050; margin-bottom: 1px; padding: 3px 0; }
.esb i { width: 15px; height: 440px; background: #cdcdcd; margin: 38px 0 auto; }
.list { padding: 0 0 0 18px; letter-spacing: -.15px; color: #6d6d6d; }
.lh { height: 25px; display: grid; grid-template-columns: 258px 144px 120px 80px; color: #44546a; margin-bottom: 6px; }
.lh span { border-right: 1px solid #e2e2e2; padding: 5px 0 0 6px; position: relative; }
.lh span:first-child { padding-left: 3px; }
.caret { position: absolute; left: 121px; top: -2px; }
.lr { width: 598px; height: 21px; display: grid; grid-template-columns: 258px 144px 120px 76px; background: #d9d9d9; border-bottom: 1px solid #b6b6b6; line-height: 20px; }
.lr:last-child { border-bottom: 0; }
.lr span { padding-left: 6px; }
.lr span:first-child { display: flex; align-items: center; gap: 5px; padding-left: 3px; color: #111; letter-spacing: 0; }
.lr span:last-child { padding: 0 4px 0 0; text-align: right; }
.estat { height: 23px; display: flex; align-items: center; padding-left: 14px; color: #1e395b; flex: none; letter-spacing: -.12px; }
.estat span { padding-right: 10px; margin-right: 10px; border-right: 1px solid #e5e5e5; }
.vb { margin-left: auto; display: flex; align-items: center; gap: 4px; padding-right: 8px; } .vb svg:first-child { width: 22px; height: 23px; }
```
